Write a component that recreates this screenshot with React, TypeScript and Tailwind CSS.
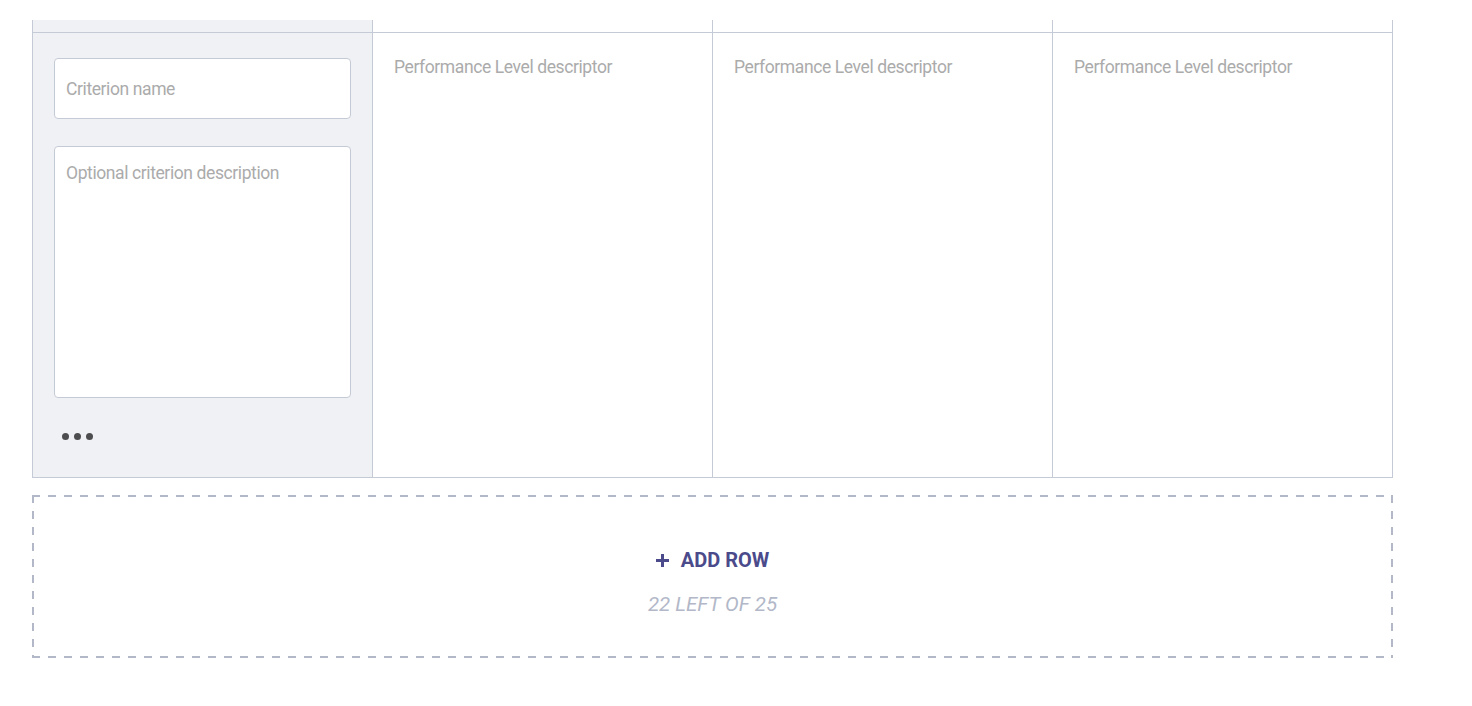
const LEVELS = [1, 2, 3];

const label = "text-[17.5px] font-normal tracking-[-0.4px]";

export default function App() {
  return (
    <div className="min-h-screen bg-white pt-[20px] pl-[32px] font-['Roboto','Liberation_Sans',sans-serif]">
      <div className="w-[1361px]">
        {/* previous row, cut off by scroll */}
        <div className="grid grid-cols-[340px_340px_340px_341px] h-[12px]">
          <div className="bg-[#f0f1f4] border-l border-[#c5cad7]" />
          {LEVELS.map((l) => (
            <div key={l} className="border-l border-[#c5cad7] last:border-r" />
          ))}
        </div>

        {/* criterion row */}
        <div className="grid grid-cols-[340px_340px_340px_341px] h-[446px] border-y border-[#c5cad7]">
          <div className="bg-[#f0f1f4] border-l border-[#c5cad7] px-[21px] pt-[25px] flex flex-col">
            <input
              placeholder="Criterion name"
              className={`h-[61px] w-full rounded-[4px] border border-[#c5cad7] bg-white px-[11px] text-gray-700 placeholder:text-[#ababab] focus:outline-none ${label}`}
            />
            <textarea
              placeholder="Optional criterion description"
              className={`mt-[27px] h-[252px] w-full resize-none rounded-[4px] border border-[#c5cad7] bg-white px-[11px] pt-[14px] leading-6 text-gray-700 placeholder:text-[#ababab] focus:outline-none ${label}`}
            />
            <div className="mt-[35px] ml-[8px] flex gap-[5px]">
              <span className="w-[7px] h-[7px] rounded-full bg-[#4d4d4f]" />
              <span className="w-[7px] h-[7px] rounded-full bg-[#4d4d4f]" />
              <span className="w-[7px] h-[7px] rounded-full bg-[#4d4d4f]" />
            </div>
          </div>
          {LEVELS.map((l) => (
            <div key={l} className="border-l border-[#c5cad7] last:border-r px-[21px] pt-[22px]">
              <p className={`leading-6 text-[#ababab] ${label}`}>Performance Level descriptor</p>
            </div>
          ))}
        </div>

        {/* add row */}
        <button
          type="button"
          className="mt-[17px] w-full h-[163px] flex flex-col items-center pt-[53px] gap-[20px] bg-white bg-no-repeat bg-[image:repeating-linear-gradient(90deg,#b3b8c8_0_8px,transparent_8px_16px),repeating-linear-gradient(90deg,#b3b8c8_0_8px,transparent_8px_16px),repeating-linear-gradient(180deg,#b3b8c8_0_8px,transparent_8px_16px),repeating-linear-gradient(180deg,#b3b8c8_0_8px,transparent_8px_16px)] bg-[length:100%_2px,100%_2px,2px_100%,2px_100%] bg-[position:0_0,0_100%,0_0,100%_0]"
        >
          <span className="flex items-center gap-[12px] text-[20px] leading-6 font-bold text-[#4b4a8b]">
            <svg width="13" height="13" viewBox="0 0 13 13" className="shrink-0">
              <path d="M6.5 0V13M0 6.5H13" stroke="currentColor" strokeWidth="3" />
            </svg>
            ADD ROW
          </span>
          <span className="text-[20.5px] leading-6 italic text-[#b2b8c8]">22 LEFT OF 25</span>
        </button>
      </div>
    </div>
  );
}
